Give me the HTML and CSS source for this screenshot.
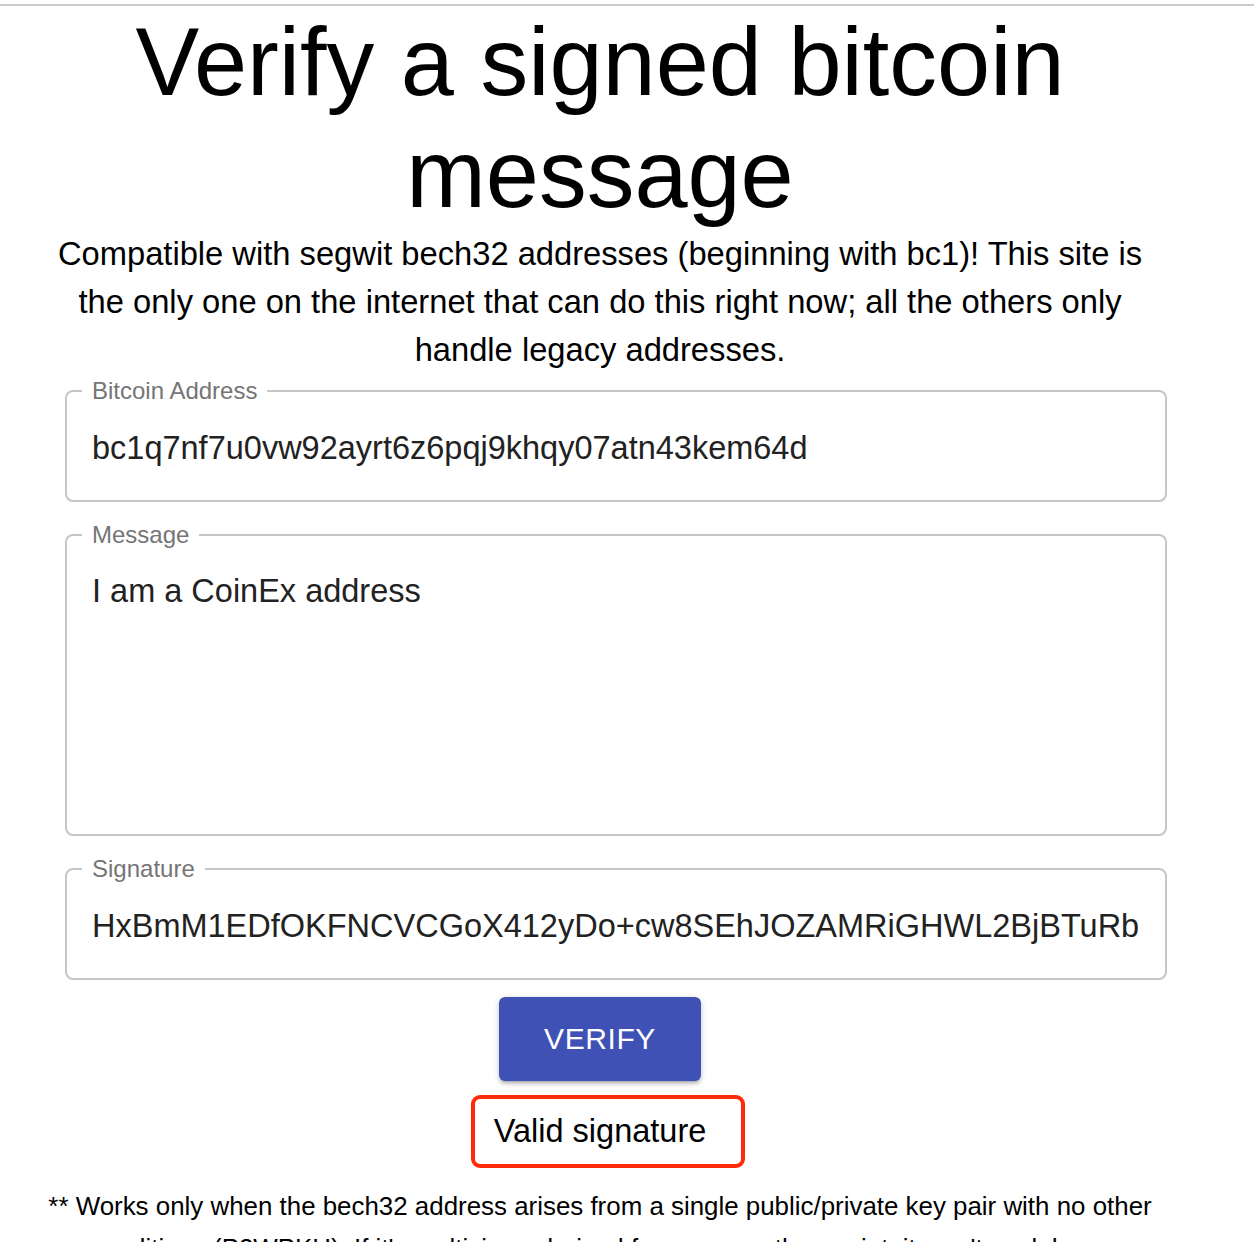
FILE: index.html
```html
<!DOCTYPE html>
<html lang="en">
<head>
  <meta charset="UTF-8" />
  <meta name="viewport" content="width=device-width, initial-scale=1.0"/>
  <title>Verify a signed bitcoin message</title>
  <link rel="stylesheet" href="styles.css">
</head>
<body>

  <div class="page">
    <!-- Heading -->
    <h1 class="title">Verify a signed bitcoin message</h1>
    <p class="intro">Compatible with segwit bech32 addresses (beginning with bc1)! This site is the only one on the internet that can do this right now; all the others only handle legacy addresses.</p>

    <!-- Form -->
    <form class="verify-form">
      <fieldset class="field">
        <legend>Bitcoin Address</legend>
        <input type="text" value="bc1q7nf7u0vw92ayrt6z6pqj9khqy07atn43kem64d" />
      </fieldset>

      <fieldset class="field field-tall">
        <legend>Message</legend>
        <textarea>I am a CoinEx address</textarea>
      </fieldset>

      <fieldset class="field">
        <legend>Signature</legend>
        <input type="text" value="HxBmM1EDfOKFNCVCGoX412yDo+cw8SEhJOZAMRiGHWL2BjBTuRbXq5yk1v8Xz0JcT0F2o8vQ=" />
      </fieldset>

      <div class="actions">
        <button type="button">Verify</button>
        <div class="result">Valid signature</div>
      </div>
    </form>

    <!-- Footnote -->
    <p class="note">** Works only when the bech32 address arises from a single public/private key pair with no other conditions (P2WPKH). If it's multisig or derived from some other script, it won't work here.</p>
  </div>

</body>
</html>
```

FILE: styles.css
```css
body, html {
  margin: 0;
  background: white;
  font-family: "Liberation Sans", Arial, Helvetica, sans-serif;
  color: black;
}

body {
  border-top: 2px solid #cccccc;
  margin-top: 4px;
}

.page {
  width: 1200px;
  text-align: center;
}

/* Heading */
.title {
  font-size: 95.5px;
  font-weight: normal;
  line-height: 112px;
  margin: 0;
}

.intro {
  font-size: 32.7px;
  line-height: 48px;
  margin: 0 50px;
}

/* Form fields */
.verify-form {
  margin: 5px 33px 0 65px;
}

.field {
  border: 2px solid #c6c6c6;
  border-radius: 8px;
  margin: 0 0 21px;
  padding: 0 25px;
  height: 123px;
  box-sizing: border-box;
  text-align: left;
}

.field legend {
  font-size: 24px;
  color: #757575;
  padding: 0 10px;
  margin-left: -10px;
  line-height: 24px;
}

.field input,
.field textarea {
  display: block;
  width: 100%;
  border: none;
  outline: none;
  padding: 0;
  font-family: "Liberation Sans", Arial, Helvetica, sans-serif;
  font-size: 32.5px;
  color: #222;
  background: transparent;
}

.field input {
  margin-top: 25px;
  height: 40px;
}

.field-tall {
  height: 313px;
}

.field textarea {
  margin-top: 24px;
  height: 240px;
  resize: none;
  line-height: 40px;
}

/* Button and result */
.actions {
  margin-left: -65px;
  margin-right: -33px;
  margin-top: -4px;
  display: flex;
  flex-direction: column;
  align-items: center;
}

button {
  width: 202px;
  height: 84px;
  border: none;
  border-radius: 6px;
  background-color: #3f51b5;
  color: white;
  font-family: "Liberation Sans", Arial, sans-serif;
  font-size: 30px;
  letter-spacing: 0.6px;
  text-transform: uppercase;
  box-shadow: 0 3px 3px -2px rgba(0,0,0,0.2), 0 3px 4px 0 rgba(0,0,0,0.14), 0 1px 8px 0 rgba(0,0,0,0.12);
  cursor: pointer;
}

.result {
  margin-top: 14px;
  margin-left: 16px;
  border: 4px solid #ff2a0a;
  border-radius: 9px;
  padding: 0 35px 0 19px;
  height: 73px;
  box-sizing: border-box;
  line-height: 65px;
  font-size: 32.5px;
}

/* Footnote */
.note {
  font-size: 25.9px;
  line-height: 42px;
  margin: 17px 45px 0;
}
```
